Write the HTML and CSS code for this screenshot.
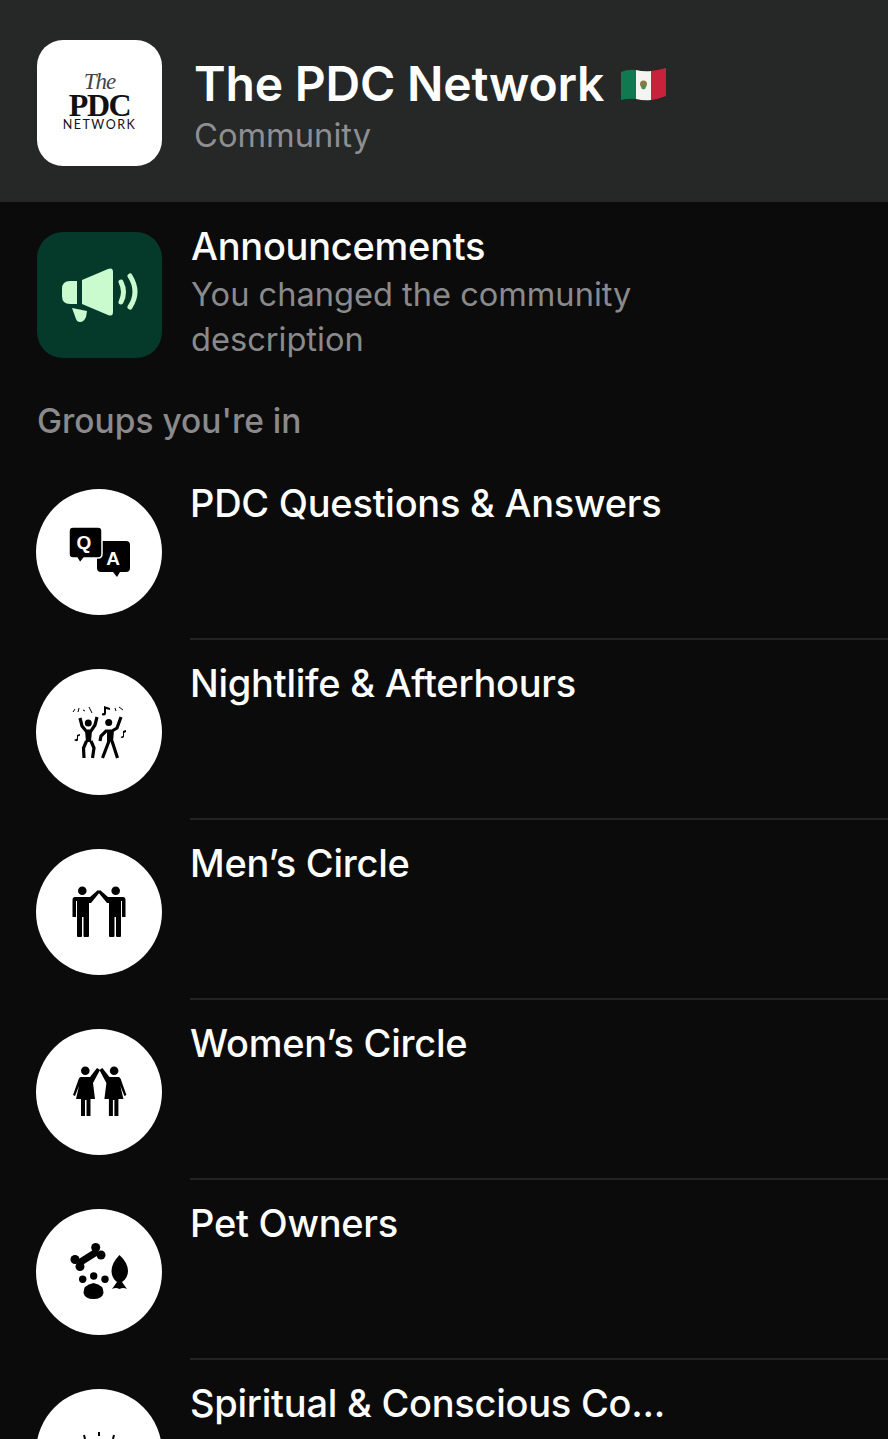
FILE: index.html
```html
<!DOCTYPE html>
<html>
<head>
    <title>The PDC Network</title>
    <link rel="stylesheet" href="styles.css">
</head>
<body>
    <div class="screen">
        <div class="header">
            <div class="logo">
                <span class="logo-the">The</span>
                <span class="logo-pdc">PDC</span>
                <span class="logo-net">NETWORK</span>
            </div>
            <div class="header-text">
                <div class="header-title">
                    The PDC Network
                    <svg class="flag" viewBox="0 0 47 34">
                        <path d="M1 5 Q8 2 16 3 V32 Q8 31 1 33 Z" fill="#0f7a50"/>
                        <path d="M16 3 Q24 5 31 4 V33 Q24 34 16 32 Z" fill="#f4f4f0"/>
                        <path d="M31 4 Q39 3 46 1 V29 Q39 32 31 33 Z" fill="#c8213c"/>
                        <circle cx="23.5" cy="17" r="3.5" fill="#8c7a45"/>
                        <circle cx="23.5" cy="20" r="2.4" fill="#4f8a5c"/>
                    </svg>
                </div>
                <div class="header-sub">Community</div>
            </div>
        </div>

        <div class="announce">
            <div class="announce-icon">
                <svg viewBox="0 0 78 54" width="78" height="54">
                    <path d="M16 13 H9 Q1 13 1 21 V28 Q1 36 9 36 H16 Z" fill="#c9fbcf"/>
                    <path d="M21 12 L47 1 Q52 -1 52 4 V44 Q52 49 47 47 L21 36 Z" fill="#c9fbcf"/>
                    <path d="M11 40 L26 43 L25 49 Q23 54 19 54 Q16 54 15 51 Z" fill="#c9fbcf"/>
                    <path d="M60 14 Q65 24 60 34" class="wave"/>
                    <path d="M69 8 Q79 24 69 39" class="wave"/>
                </svg>
            </div>
            <div class="announce-text">
                <div class="row-title">Announcements</div>
                <div class="announce-sub">You changed the community description</div>
            </div>
        </div>

        <div class="section-label">Groups you're in</div>

        <div class="group">
            <div class="avatar">
                <svg viewBox="0 0 64 56" width="64" height="56">
                    <path d="M34 17 H59 Q63 17 63 21 V44 Q63 48 59 48 H53 L50 53 L46 48 H34 Q30 48 30 44 V21 Q30 17 34 17 Z"/>
                    <path d="M6 3 H31 Q35 3 35 7 V30 Q35 34 31 34 H17 L13 39 L10 34 H6 Q2 34 2 30 V7 Q2 3 6 3 Z" stroke="#fff" stroke-width="1.500"/>
                    <text x="17" y="25" class="bubble-letter">Q</text>
                    <text x="46" y="41" class="bubble-letter">A</text>
                </svg>
            </div>
            <div class="group-text"><div class="row-title">PDC Questions &amp; Answers</div></div>
        </div>

        <div class="group">
            <div class="avatar">
                <svg viewBox="0 0 56 56" width="56" height="56">
                    <circle cx="17.300" cy="19" r="3.500"/>
                    <path d="M9 14 L11 22 L15 27 H20 L24 21 L26 13" class="limb"/>
                    <path d="M14 26 H21 L20 38 H15 Z"/>
                    <path d="M15.500 37 L12.500 44 L13 54 M20 37 L23 44 L21.500 54" class="limb"/>
                    <circle cx="37.700" cy="18.500" r="3.500"/>
                    <path d="M50 13 L46 24 L41 27 H35 L30 32 L29 37" class="limb"/>
                    <path d="M36 26 H43 L42 38 H36 Z"/>
                    <path d="M38 37 L31.500 54 M41 37 L46.500 54" class="limb"/>
                    <path d="M32 9 L33 9 V2 L39 4 V6 L35 5 V10 Q34 12 31.500 11.500 Q30 10 32 9 Z"/>
                    <path d="M3 36 L6 34.500 V31 L9 30 V31.500 L7 32.500 V36.500 Q5 38 3 36 Z"/>
                    <path d="M49.500 33 L52 32 V27 L55 26 V28 L53 29 V33 Q51 35 49.500 33 Z"/>
                    <path d="M2 8 L4 5 M8 4 L7 8 M12 6 L14 7 M18 3 L21 9 M44 4 L45 7 M48 3 L52 6" class="dash"/>
                </svg>
            </div>
            <div class="group-text"><div class="row-title">Nightlife &amp; Afterhours</div></div>
        </div>

        <div class="group">
            <div class="avatar">
                <svg viewBox="0 0 56 56" width="56" height="56">
                    <g id="man">
                        <circle cx="11.300" cy="6.700" r="4.300"/>
                        <path d="M6 13 H19 L27 6 L29 8 L20 19 H18 V52 Q18 53 17 53 H13.500 Q12.500 53 12.500 52 V33 H11 V52 Q11 53 10 53 H7 Q6 53 6 52 Z"/>
                        <path d="M6 13 H4 Q1.500 13 1.500 16 V33 H5 V17 H6 Z"/>
                    </g>
                    <use href="#man" transform="translate(56 0) scale(-1 1)"/>
                </svg>
            </div>
            <div class="group-text"><div class="row-title">Men’s Circle</div></div>
        </div>

        <div class="group">
            <div class="avatar">
                <svg viewBox="0 0 56 56" width="56" height="56">
                    <g id="woman">
                        <circle cx="14.300" cy="6.700" r="4.300"/>
                        <path d="M10 13 H19 L26 4 L29 6 L22 19 L24 35 H19.500 V52 H15.500 V36 H14 V52 H10 V35 H5 L8 22 L4 32 L2 31 L7 17 Q8 13 10 13 Z"/>
                    </g>
                    <use href="#woman" transform="translate(57.400 0) scale(-1 1)"/>
                </svg>
            </div>
            <div class="group-text"><div class="row-title">Women’s Circle</div></div>
        </div>

        <div class="group">
            <div class="avatar">
                <svg viewBox="0 0 58 58" width="58" height="58">
                    <path d="M9 20 L28 8" stroke="#000" stroke-width="7"/>
                    <circle cx="5" cy="16.500" r="4.500"/>
                    <circle cx="10" cy="23.500" r="4.500"/>
                    <circle cx="25.700" cy="4.500" r="4.500"/>
                    <circle cx="31" cy="12" r="4.500"/>
                    <circle cx="12.700" cy="36.300" r="3.700"/>
                    <circle cx="23.700" cy="33" r="3.700"/>
                    <circle cx="35" cy="36.300" r="3.700"/>
                    <path d="M23.500 40 Q34 42 33.500 50 Q32 56 23.500 56 Q15 56 13.500 50 Q13 42 23.500 40 Z"/>
                    <path d="M49.500 12 Q58 20 58 28 Q58 35 52 39 L57 46 Q53 44 49.500 46 Q46 44 42 46 L47 39 Q41.500 35 41.500 28 Q41.500 20 49.500 12 Z"/>
                </svg>
            </div>
            <div class="group-text"><div class="row-title">Pet Owners</div></div>
        </div>

        <div class="group">
            <div class="avatar">
                <svg viewBox="0 0 56 56" width="56" height="56">
                    <path d="M28 8 V12 M13 11 L14 15 M43 11 L42 15" stroke="#000" stroke-width="2"/>
                </svg>
            </div>
            <div class="group-text"><div class="row-title">Spiritual &amp; Conscious Co...</div></div>
        </div>
    </div>
</body>
</html>
```

FILE: styles.css
```css
html, body {
    margin: 0;
    padding: 0;
}
body {
    background-color: #0b0b0b;
    color: #fff;
    font-family: Inter, "Liberation Sans", sans-serif;
}
.screen {
    width: 888px;
    height: 1439px;
    overflow: hidden;
}
.header {
    height: 202px;
    box-sizing: border-box;
    background-color: #262727;
    padding: 40px 36px 0 37px;
    display: flex;
    gap: 32px;
}
.logo {
    width: 125px;
    height: 126px;
    flex-shrink: 0;
    background-color: #fff;
    border-radius: 26px;
    color: #111;
    display: flex;
    flex-direction: column;
    align-items: center;
    padding-top: 31px;
    box-sizing: border-box;
}
.logo-the {
    font-family: "Liberation Serif", serif;
    font-style: italic;
    font-size: 23px;
    line-height: 22px;
    letter-spacing: -1px;
    color: #444;
}
.logo-pdc {
    font-family: "Liberation Serif", serif;
    font-weight: bold;
    font-size: 32px;
    line-height: 24px;
    letter-spacing: -1.5px;
}
.logo-net {
    font-family: "Lato", sans-serif;
    font-size: 12.5px;
    line-height: 15px;
    letter-spacing: 1.5px;
}
.header-text {
    padding-top: 15px;
}
.header-title {
    font-size: 48px;
    font-weight: 600;
    line-height: 58px;
    letter-spacing: -0.2px;
    display: flex;
    align-items: center;
    gap: 16px;
    white-space: nowrap;
}
.flag {
    width: 47px;
    height: 34px;
}
.header-sub {
    font-size: 32.7px;
    line-height: 40px;
    color: #8e8f91;
    margin-top: 2px;
}
.announce {
    display: flex;
    gap: 29px;
    padding: 30px 37px 0;
}
.announce-icon {
    width: 125px;
    height: 126px;
    flex-shrink: 0;
    border-radius: 26px;
    background-color: #053a2a;
    display: flex;
    align-items: center;
    justify-content: center;
}
.wave {
    fill: none;
    stroke: #c9fbcf;
    stroke-width: 5;
    stroke-linecap: round;
}
.announce-text {
    width: 480px;
    margin-top: -9px;
}
.row-title {
    font-size: 38px;
    font-weight: 500;
    line-height: 46px;
    letter-spacing: -0.25px;
    white-space: nowrap;
}
.announce-sub {
    font-size: 32.6px;
    line-height: 45px;
    color: #8a8a8c;
    margin-top: 3px;
}
.section-label {
    font-size: 33.500px;
    font-weight: 500;
    line-height: 40px;
    color: #8a8a8c;
    padding: 39px 37px 0;
}
.group {
    height: 180px;
    display: flex;
    padding-left: 36px;
    gap: 28px;
    box-sizing: border-box;
}
.section-label + .group {
    margin-top: 27px;
}
.avatar {
    width: 126px;
    height: 126px;
    flex-shrink: 0;
    margin-top: 21px;
    border-radius: 50%;
    background-color: #fff;
    display: flex;
    align-items: center;
    justify-content: center;
}
.avatar svg {
    fill: #000;
}
.limb {
    fill: none;
    stroke: #000;
    stroke-width: 3.2;
}
.dash {
    fill: none;
    stroke: #000;
    stroke-width: 1;
}
.bubble-letter {
    fill: #fff;
    font-family: "Liberation Sans", sans-serif;
    font-weight: bold;
    font-size: 19px;
    text-anchor: middle;
}
.group-text {
    flex: 1;
    height: 172px;
    border-bottom: 2px solid #232325;
    padding-top: 12px;
    box-sizing: border-box;
}
```
